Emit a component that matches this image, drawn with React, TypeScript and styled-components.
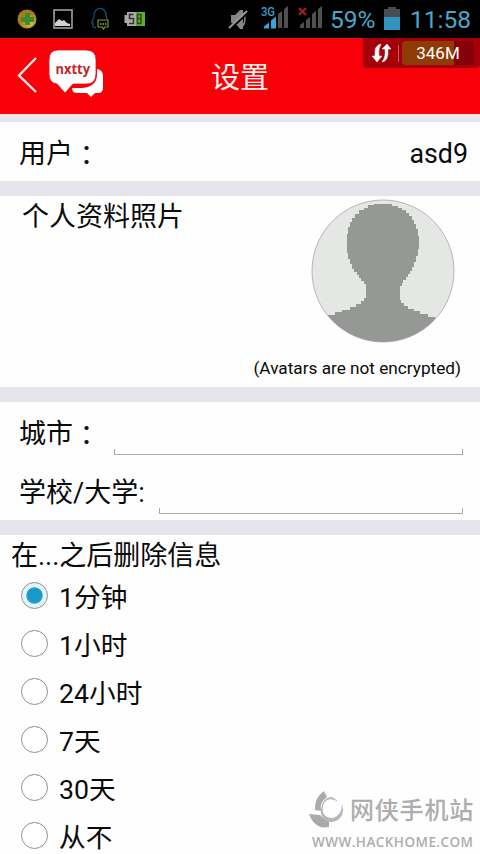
import React, { useState } from "react";
import styled, { createGlobalStyle } from "styled-components";

const GlobalStyle = createGlobalStyle`
  * { box-sizing: border-box; }
  body {
    margin: 0;
    background: #fff;
    color: #0a0a0a;
    font-family: Roboto, "Noto Sans CJK SC", sans-serif;
    overflow: hidden;
  }
`;

const Screen = styled.div`
  position: relative;
  display: flex;
  flex-direction: column;
  width: 480px;
  height: 854px;
  overflow: hidden;
  background: #fefefe;
`;

const StatusBar = styled.div`
  display: flex;
  align-items: center;
  justify-content: space-between;
  height: 38px;
  flex: none;
  background: #000;
`;

const StatusGroup = styled.div`
  display: flex;
  align-items: center;
  height: 38px;
`;

const StatusText = styled.span<{ $width: number; $left: number }>`
  flex: none;
  width: ${(p) => p.$width}px;
  margin-left: ${(p) => p.$left}px;
  padding-top: 1px;
  font-size: 24.5px;
  line-height: 36px;
  white-space: nowrap;
  color: #4ba6cd;
`;

const Header = styled.header`
  position: relative;
  display: grid;
  grid-template-columns: 120px 1fr 120px;
  align-items: center;
  height: 76px;
  flex: none;
  background: #f80008;
`;

const Title = styled.h1`
  margin: 0;
  padding-top: 3px;
  text-align: center;
  font-size: 29px;
  line-height: 40px;
  font-weight: 400;
  color: #fff0ee;
`;

const MemoryBadge = styled.div`
  position: absolute;
  top: 0;
  right: 0;
  display: flex;
  align-items: center;
  width: 117px;
  height: 30px;
  padding-left: 8px;
  border-radius: 0 0 4px 4px;
  background: #a50009;
`;

const BadgeDivider = styled.div`
  width: 1px;
  height: 17px;
  margin: 0 3px 0 5px;
  background: #c96060;
`;

const MemoryMeter = styled.div`
  width: 72px;
  height: 24px;
  border-radius: 4px;
  background: linear-gradient(90deg, #8f3b07 0 52px, #86000a 52px);
  text-align: center;
  font-size: 17px;
  line-height: 25px;
  color: #fff;
`;

const Divider = styled.div<{ $height: number }>`
  flex: none;
  height: ${(p) => p.$height}px;
  background: #e6e5eb;
`;

const TopDivider = styled(Divider)`
  background: linear-gradient(#f6e0ea 0 4px, #e6e4ea 4px);
`;

const Row = styled.section`
  display: flex;
  align-items: center;
  justify-content: space-between;
  flex: none;
  height: 59px;
  padding: 3px 12px 0 19px;
`;

const Label = styled.span<{ $size?: number }>`
  flex: none;
  height: 40px;
  padding-top: 1px;
  font-size: ${(p) => p.$size ?? 27}px;
  line-height: 40px;
  white-space: nowrap;
`;

const Colon = styled.span`
  display: inline-block;
  height: 20px;
  font-family: "Noto Sans CJK TC", sans-serif;
  line-height: 1;
  transform: translateY(2px);
`;

const PhotoSection = styled.section`
  display: flex;
  justify-content: space-between;
  flex: none;
  height: 191px;
  padding: 0 19px 0 22px;
`;

const PhotoColumn = styled.div`
  display: flex;
  flex-direction: column;
  align-items: flex-end;
  padding-top: 3px;
`;

const Avatar = styled.svg`
  width: 144px;
  height: 144px;
  margin-right: 6px;
`;

const Caption = styled.span`
  margin-top: 13px;
  font-size: 17.2px;
  line-height: 24px;
  white-space: nowrap;
`;

const Fields = styled.section`
  flex: none;
  height: 118px;
  padding: 0 17px 0 19px;
`;

const Field = styled.label<{ $height: number }>`
  display: flex;
  align-items: flex-end;
  justify-content: space-between;
  height: ${(p) => p.$height}px;
`;

const FieldLabel = styled(Label)`
  margin-bottom: 2px;
`;

const FieldInput = styled.div<{ $width: number }>`
  width: ${(p) => p.$width}px;
  height: 6px;
  border: 1px solid #aaa;
  border-top: 0;
`;

const TextInput = styled.input`
  display: block;
  width: 100%;
  height: 5px;
  padding: 0;
  border: 0;
  outline: 0;
  background: transparent;
`;

const Expiry = styled.section`
  display: flex;
  flex-direction: column;
  padding: 0 0 0 11px;
`;

const OptionList = styled.div`
  display: flex;
  flex-direction: column;
  margin-top: -2px;
`;

const Option = styled.button`
  display: flex;
  align-items: center;
  gap: 11px;
  height: 48px;
  padding: 0 0 0 10px;
  border: 0;
  background: none;
  color: inherit;
  font-family: inherit;
  text-align: left;
`;

const Radio = styled.span<{ $on: boolean }>`
  flex: none;
  width: 27px;
  height: 27px;
  margin-bottom: 3px;
  border: 1.5px solid #8f8f8f;
  border-radius: 50%;
  background: ${(p) =>
    p.$on ? "radial-gradient(circle, #149bcb 0 6.5px, #3f9fc6 7.8px, #e2f4fc 8.6px)" : "#fff"};
`;

const Watermark = styled.div`
  position: absolute;
  left: 308px;
  top: 789px;
  width: 168px;
  color: #adadad;
`;

const WatermarkTop = styled.div`
  display: flex;
  gap: 6px;
  height: 43px;
`;

const WatermarkName = styled.span`
  padding-top: 4px;
  font-size: 24px;
  line-height: 36px;
  letter-spacing: 0.8px;
  font-weight: 500;
  white-space: nowrap;
`;

const WatermarkUrl = styled.div`
  padding-left: 4px;
  font-family: "Open Sans", sans-serif;
  font-size: 13.5px;
  line-height: 20px;
  font-weight: 600;
  letter-spacing: 0.45px;
  white-space: nowrap;
`;

const NotificationIcons = () => (
  <svg width="160" height="38" viewBox="0 0 160 38">
    <defs>
      <radialGradient id="gold" cx=".65" cy=".7">
        <stop offset="0" stopColor="#e0c84e" />
        <stop offset="1" stopColor="#a87c18" />
      </radialGradient>
    </defs>
    <circle cx="27" cy="19" r="9.5" fill="url(#gold)" />
    <path d="M25 13h5v4h4v5h-4v3h-5v-3h-4v-5h4z" fill="#3d8b2e" />
    <rect x="54" y="10" width="18" height="18" fill="none" stroke="#aaa" strokeWidth="1.5" />
    <path d="M55 26v-3l4-4 3 2 2-1 3 3 3 1v2z" fill="#d0d0d0" />
    <path d="M96 27.500c-4 0-3-2-3-4-2 1-1-3 1-6C93 5 107 6 106 16l1 3" fill="none" stroke="#175075" strokeWidth="1.3" />
    <path d="M98 20h10v7h-3l-1.500 2-1.500-2h-4z" fill="none" stroke="#8f9c20" strokeWidth="1.1" />
    <path d="M100 24h1.500M102.500 24h1.500M105 24h1.500" stroke="#a4ab3a" strokeWidth="1.3" />
    <path d="M127 12h18v14h-18v-3h-2.500v-8h2.500z" fill="#a9ada6" />
    <rect x="136" y="12" width="9" height="14" fill="#62ae22" />
    <path d="M133.500 14.500h-4v4h4v5h-4.500" fill="none" stroke="#333" strokeWidth="1.5" />
    <path d="M141 14.500h-3.500v4h3.500zM137.500 18.500v5h3.500v-5" fill="none" stroke="#33472a" strokeWidth="1.5" />
  </svg>
);

const SignalIcons = () => (
  <svg width="96" height="38" viewBox="0 0 96 38">
    <path d="M3 15h4l5-5h3v19h-3l-5-6H3z" fill="#858585" />
    <path d="M15 13q4 6 0 13" fill="none" stroke="#858585" strokeWidth="1.5" />
    <path d="M2 29.500 20 12.500" stroke="#000" strokeWidth="2" />
    <path d="M1 28 19 11" stroke="#999" strokeWidth="1.8" />
    <text x="33" y="16" fontSize="13" fontFamily="Roboto, sans-serif" fontWeight="500" fill="#419dc9" textLength="14" lengthAdjust="spacingAndGlyphs">3G</text>
    <path d="M36 28.500v-2l5-4v6zM43 28.500V20.500l5-4v12z" fill="#38a6da" />
    <path d="M50 28V14l4-3v17zM56 28V9l4-3v22z" fill="#505050" />
    <path d="m71 8 7 7m0-7-7 7" stroke="#a61f24" strokeWidth="2" />
    <path d="M72 28v-3l4-3v6zM78 28v-8l4-3v11zM84 28V14l4-3v17zM90 28V9l4-3v22z" fill="#505050" />
  </svg>
);

const BatteryIcon = () => (
  <svg width="16" height="38" viewBox="0 0 16 38">
    <path d="M0 9h4V7h8v2h4v9H0z" fill="#484e50" />
    <rect y="17" width="16" height="13" fill="#3293bf" />
  </svg>
);

const Logo = () => (
  <svg width="120" height="76" viewBox="0 0 120 76">
    <path d="M36 20 19 37.500 36 54" fill="none" stroke="#ffe8e5" strokeWidth="2.400" />
    <path d="M97 31q6 1 6 7v12q0 5-5 5h-3l-4 4-4-4H77q-5 0-5-5h10q15-1 15-14z" fill="#fff" />
    <path d="M58 12h28q10 0 10 10v14q0 10-10 10H73l-8 9-8-9q-8-1-8-10V22q0-10 9-10z" fill="#fff" stroke="#e61218" strokeWidth=".8" />
    <text x="55.500" y="36" fontFamily="Open Sans, sans-serif" fontWeight="700" fontSize="14" textLength="34.500" lengthAdjust="spacingAndGlyphs" fill="#c8242c">nxtty</text>
  </svg>
);

const TransferIcon = () => (
  <svg width="22" height="22" viewBox="0 0 22 22">
    <path d="M10 2Q3 3 4 14H1l5 6 5-6H8Q7 7 10 2zM11 20q7-1 6-13h3l-4-5-5 5h3q1 8-3 13z" fill="#fff" stroke="#fff" strokeWidth=".5" />
  </svg>
);

const Portrait = () => (
  <Avatar viewBox="0 0 144 144">
    <defs>
      <clipPath id="round">
        <circle cx="72" cy="72" r="71" />
      </clipPath>
    </defs>
    <g clipPath="url(#round)">
      <rect width="144" height="144" fill="#e5e7e5" />
      <path
        fill="#969896"
        d="M57 8V6h6V5h18v2h6v2h4v2h4v3h3v3h3v4h2v4h2v5h2v7h1v13h-1v7h-2v6h-2v5h-2v4h-2v3h-2v3h-2v3h-3v3h-1v3h-2v14h1v3h3v3h4v3h6v2h6v3h8v3h7v3h5v29H9v-31h8v-3h7v-3h7v-2h8v-3h6v-3h5v-3h3v-3h2V85h-2v-3h-3v-3h-2v-3h-2v-3h-3v-3h-2v-5h-2v-5h-2v-6h-1V35h1v-7h2v-5h2v-4h3v-4h4v-4h5V9h4z"
      />
    </g>
    <circle cx="72" cy="72" r="71" fill="none" stroke="#a5a7a5" strokeWidth=".8" />
  </Avatar>
);

const WatermarkLogo = () => (
  <svg width="36" height="41" viewBox="0 0 36 41">
    <path d="M16 2 19 8Q11 14 13 22L7 21Q6 9 16 2zM1 25l11 1q6 7 9 4v8Q7 41 1 25z" fill="#aaa" />
    <path d="M29 12q-11-5-14 5-2 12 10 12 9-3 9-14l1 5Q35 32 23 33 12 32 13 20 15 8 24 8l6 4z" fill="#b7b7b7" />
  </svg>
);

const durations = ["1分钟", "1小时", "24小时", "7天", "30天", "从不"];

export default function App() {
  const [selected, setSelected] = useState(0);
  return (
    <>
      <GlobalStyle />
      <Screen>
        <StatusBar>
          <NotificationIcons />
          <StatusGroup>
            <SignalIcons />
            <StatusText $width={54} $left={6}>59%</StatusText>
            <BatteryIcon />
            <StatusText $width={70} $left={10}>11:58</StatusText>
          </StatusGroup>
        </StatusBar>
        <Header>
          <Logo />
          <Title>设置</Title>
          <MemoryBadge>
            <TransferIcon />
            <BadgeDivider />
            <MemoryMeter>346M</MemoryMeter>
          </MemoryBadge>
        </Header>
        <TopDivider $height={8} />
        <Row>
          <Label>用户<Colon>：</Colon></Label>
          <Label $size={26.8}>asd9</Label>
        </Row>
        <Divider $height={15} />
        <PhotoSection>
          <Label>个人资料照片</Label>
          <PhotoColumn>
            <Portrait />
            <Caption>(Avatars are not encrypted)</Caption>
          </PhotoColumn>
        </PhotoSection>
        <Divider $height={15} />
        <Fields>
          <Field $height={53}>
            <FieldLabel>城市<Colon>：</Colon></FieldLabel>
            <FieldInput $width={349}><TextInput aria-label="城市" /></FieldInput>
          </Field>
          <Field $height={59}>
            <FieldLabel>学校/大学:</FieldLabel>
            <FieldInput $width={304}><TextInput aria-label="学校/大学" /></FieldInput>
          </Field>
        </Fields>
        <Divider $height={15} />
        <Expiry>
          <Label>在...之后删除信息</Label>
          <OptionList role="radiogroup">
            {durations.map((name, i) => (
              <Option key={name} role="radio" aria-checked={i === selected} onClick={() => setSelected(i)}>
                <Radio $on={i === selected} />
                <Label $size={26.7}>{name}</Label>
              </Option>
            ))}
          </OptionList>
        </Expiry>
        <Watermark>
          <WatermarkTop>
            <WatermarkLogo />
            <WatermarkName>网侠手机站</WatermarkName>
          </WatermarkTop>
          <WatermarkUrl>WWW.HACKHOME.COM</WatermarkUrl>
        </Watermark>
      </Screen>
    </>
  );
}
